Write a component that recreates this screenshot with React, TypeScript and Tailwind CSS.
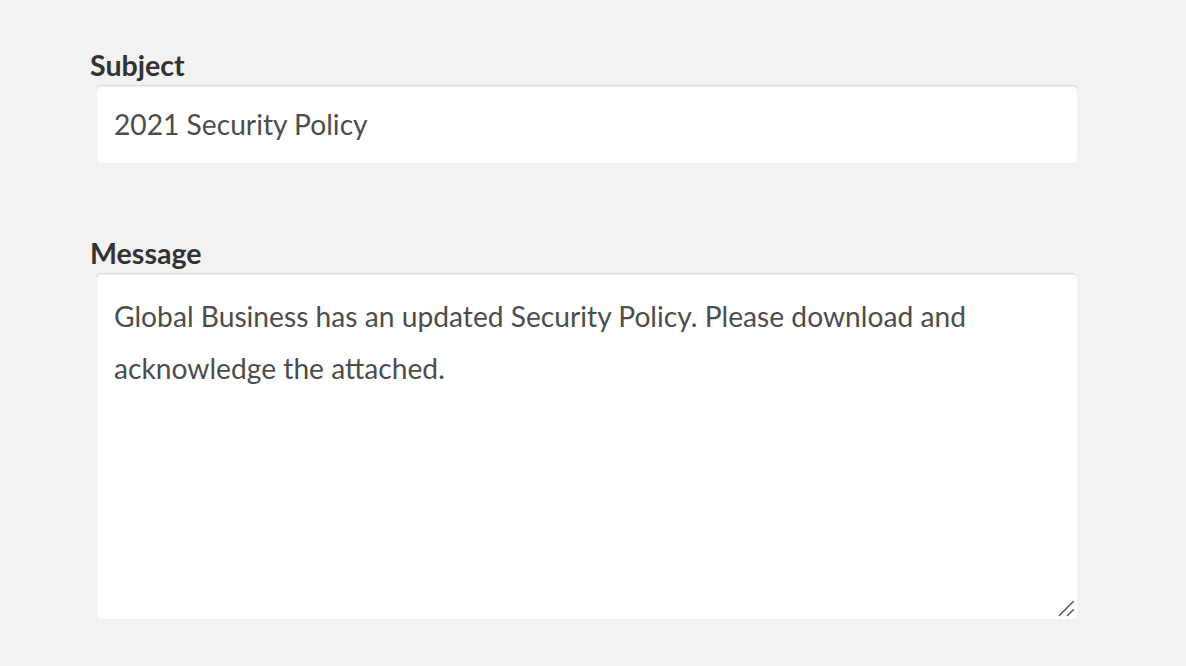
import React from "react";

export default function App() {
  return (
    <div className="w-[1186px] h-[666px] bg-[#f2f2f2] overflow-hidden" style={{ fontFamily: "Lato, 'Noto Sans', sans-serif" }}>
      <div className="pt-[47px] pl-[90px]">
        <label className="block text-[28.6px] leading-[36px] font-bold text-[#333333]">Subject</label>
        <input
          className="block ml-[6px] mt-[2px] w-[982px] h-[78px] rounded-[5px] bg-white px-[18px] text-[28.2px] text-[#4d4d4d] outline-none shadow-[inset_0_1px_2px_rgba(0,0,0,0.18)]"
          defaultValue="2021 Security Policy"
          style={{ fontFamily: "Lato, sans-serif" }}
        />
        <label className="block mt-[72px] text-[28.6px] leading-[36px] font-bold text-[#333333]">Message</label>
        <div className="relative ml-[6px] mt-[2px] w-[982px] h-[346px]">
          <textarea
            className="block w-full h-full resize-none rounded-[5px] bg-white px-[18px] pt-[17px] text-[28.2px] leading-[52px] text-[#4d4d4d] outline-none shadow-[inset_0_1px_2px_rgba(0,0,0,0.18)]"
            defaultValue="Global Business has an updated Security Policy. Please download and acknowledge the attached."
            style={{ fontFamily: "Lato, sans-serif" }}
          />
          <svg className="absolute right-0 bottom-0" width="30" height="30" viewBox="0 0 30 30">
            <line x1="11.3" y1="26.5" x2="25.3" y2="12.5" stroke="#555" strokeWidth="1.5" strokeLinecap="round" />
            <line x1="19.5" y1="26.5" x2="25.3" y2="20.7" stroke="#555" strokeWidth="1.5" strokeLinecap="round" />
          </svg>
        </div>
      </div>
    </div>
  );
}
